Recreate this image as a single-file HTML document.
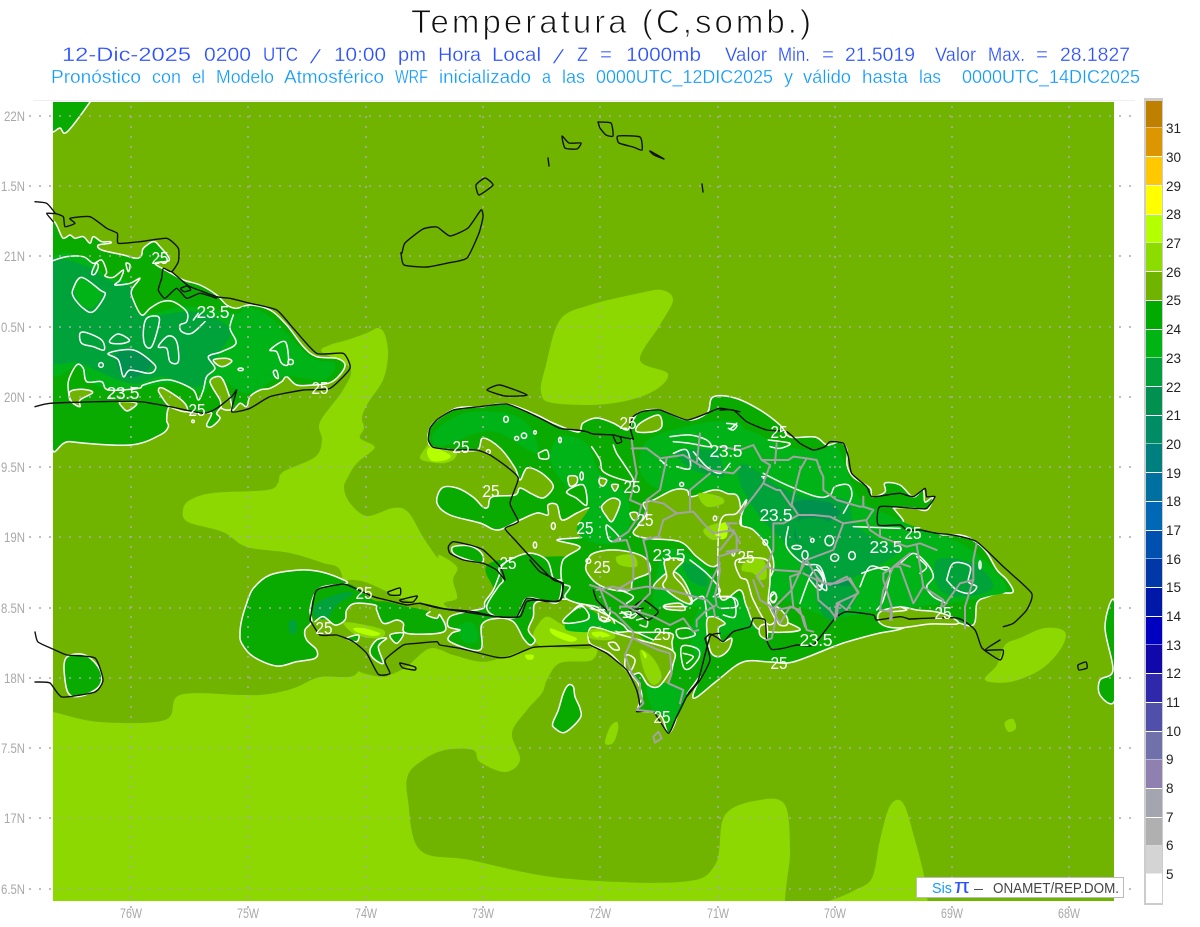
<!DOCTYPE html>
<html lang="es"><head><meta charset="utf-8"><title>Temperatura</title>
<style>
html,body{margin:0;padding:0;background:#fff;width:1200px;height:927px;overflow:hidden}
svg{display:block}
text{font-family:"Liberation Sans",sans-serif}
.t{fill:#111;stroke:#fff;stroke-width:.9;font-size:33px}
.a{fill:#2b50ff;stroke:#fff;stroke-width:.25;font-size:19px}
.b{fill:#119aff;stroke:#fff;stroke-width:.25;font-size:18px}
.l{fill:#a8a8a8;font-size:13.5px}
.c{fill:#222;font-size:13.5px}
.z{fill:#fff;font-size:17.5px;text-anchor:middle}
.w,.k,.g{fill:none;stroke-linejoin:round;stroke-linecap:round;vector-effect:non-scaling-stroke}
.w *,.k *,.g *{vector-effect:non-scaling-stroke}
.w{stroke:#fff;stroke-width:1.5}
.k{stroke:#111;stroke-width:1.4}
.g{stroke:#a3a3a3;stroke-width:2}
.hole{fill:#70b400}
.holew{fill:#70b400;stroke:#fff;stroke-width:1.5;stroke-linejoin:round;vector-effect:non-scaling-stroke}
.d{fill:#09ab00}
.dw{fill:#09ab00;stroke:#fff;stroke-width:1.5;stroke-linejoin:round;vector-effect:non-scaling-stroke}
.m1{fill:#00b316}
.m2{fill:#00a33a}
.m3{fill:#00914f}
.lt{fill:#8cd800}
.lm{fill:#b4ff00}
</style></head><body>
<svg id="s" width="1200" height="927" viewBox="0 0 1200 927" xmlns="http://www.w3.org/2000/svg">
<defs><clipPath id="mp"><rect x="53" y="102" width="1061" height="799"/></clipPath></defs>
<rect width="1200" height="927" fill="#fff"/>
<line x1="33" y1="100.5" x2="1135" y2="100.5" stroke="#eee"/>

<g clip-path="url(#mp)">
<rect x="53" y="102" width="1061" height="799" fill="#70b400"/>
<polygon class="lt" points="30,925 30,720 35,714 45,712 53,712 100,722 165,720 180,695 240,695 260,695 280,692 297,687 320,677 355,675 357,650 345,600 340,570 323,563 290,553 247,547 223,532 188,522 183,510 190,500 213,493 267,490 278,483 283,472 315,457 322,440 320,422 343,390 350,368 322,352 330,345 347,340 367,333 378,328 385,335 388,355 383,380 368,403 362,417 364,428 360,438 373,445 373,450 357,463 348,477 344,488 350,503 367,516 393,508 408,512 423,537 437,557 440,555 457,567 453,580 457,598 447,607 520,640 590,643 592,660 560,663 547,680 542,693 527,710 512,733 520,760 505,772 480,762 473,750 445,750 423,760 408,775 408,800 420,850 470,860 560,878 680,882 715,865 725,815 760,800 785,805 790,850 787,880 785,900 785,915 782,925 500,935 200,935"/>
<polygon class="lt" points="800,925 812,908 840,897 855,890 872,878 880,840 890,806 903,803 915,840 925,880 928,905 930,925 880,935"/>
<polygon class="lt" points="985,680 1010,682 1040,670 1060,650 1065,632 1045,628 1020,638 1005,645 997,665"/>
<polygon class="lt" points="1005,722 1013,719 1016,728 1010,732 1006,729"/>
<polygon class="lt" points="605,743 610,727 617,722 618,730 613,743"/>
<polygon class="lt" points="541,392 546,365 560,320 590,305 640,293 662,290 673,300 660,325 640,360 668,374 650,393 607,404 553,403"/>
<g transform="translate(240,560) scale(.33333)">
<polygon class="hole" points="210,100 345,60 500,120 640,148 770,165 860,125 960,125 1060,255 960,262 880,262 780,295 720,305 640,285 570,265 500,320 450,345 420,350 350,330 340,280 240,240 200,200"/>
<polygon class="lt" points="890,200 920,170 960,190 1000,210 1100,215 1170,240 1150,262 1050,255 960,258 900,258 880,230"/>
<polygon class="lt" points="1195,265 1220,260 1285,310 1280,345 1240,340 1215,300"/>
<polygon class="lt" points="310,190 350,190 430,210 420,235 350,225"/>
<polygon class="lm" points="340,205 375,205 420,220 400,228 355,218"/>
<polygon class="lm" points="930,205 960,215 1010,235 990,245 940,225"/>
<polygon class="lm" points="1060,218 1110,218 1108,230 1062,228"/>
<polygon class="lm" points="856,285 880,285 878,298 862,298"/>
</g>
<polygon class="lt" points="420,458 427,446 432,442 455,450 455,458 445,463 430,462"/>
<polygon class="lm" points="427,452 432,447 450,455 446,460 432,461"/>

<polygon class="dw" points="40,134 53,132 60,128 67,132 90,102 95,92 40,92"/>
<polygon class="dw" points="66,658 85,655 100,670 100,685 85,695 70,695 65,680"/>
<polygon class="dw" points="1114,600 1105,627 1113,670 1100,680 1100,695 1114,702 1120,660"/>
<g transform="translate(30,200) scale(.33333)">
<polygon class="dw" points="60,105 100,115 120,105 135,115 160,110 180,130 190,110 215,125 240,125 240,130 205,135 215,150 280,165 320,175 335,165 340,145 370,125 390,140 418,180 375,190 415,215 460,240 510,255 560,285 590,315 620,325 660,315 720,330 770,375 820,440 860,470 920,475 945,495 925,530 895,550 850,555 800,555 770,530 755,545 720,565 690,570 660,590 650,620 630,610 610,630 600,620 600,590 575,620 560,640 570,655 545,680 530,675 545,640 520,640 470,635 420,620 410,660 415,680 390,705 300,735 120,725 60,705"/>
<polygon class="m1" points="60,190 170,175 230,230 300,250 330,340 470,320 620,340 640,320 720,350 840,470 915,490 880,540 760,530 650,580 560,530 520,580 440,550 320,565 230,565 170,540 140,500 60,510"/>
<polygon class="m2" points="60,200 160,195 235,240 300,260 335,345 500,335 600,390 560,470 510,560 400,530 300,550 150,490 60,470"/>
<polygon class="m3" points="260,462 320,452 365,490 320,530 275,520"/>
<polygon class="m1" points="135,255 155,235 205,270 215,290 185,325 155,315 135,285"/>
</g>
<g transform="translate(240,560) scale(.33333)">
<polygon class="dw" points="0,220 5,250 40,290 110,318 170,305 225,295 230,270 200,240 195,210 215,185 210,150 225,100 250,80 320,70 300,55 240,35 180,30 90,45 40,85 20,130 5,180"/>
<polygon class="d" points="222,185 215,130 240,85 310,72 345,80 400,120 440,125 500,140 530,145 570,155 560,165 590,175 600,165 612,215 500,220 490,190 470,180 430,190 410,150 405,135 345,130 320,150 315,180 285,195 250,170"/>
<polygon class="m2" points="225,170 230,130 300,100 340,100 290,135 262,175"/>
<polygon class="m2" points="145,190 165,180 172,205 155,225"/>
<polygon class="dw" points="390,270 410,240 440,235 415,260 430,310 400,295"/>
<polygon class="dw" points="450,225 490,220 470,250"/>
<polygon class="dw" points="320,235 355,225 350,245"/>
<polygon class="d" points="780,0 760,90 735,125 730,145 680,155 630,170 625,200 660,210 635,220 630,245 720,270 725,195 770,175 820,185 850,235 870,255 885,240 865,210 880,170 885,130 930,120 1000,120 1080,155 1120,180 1130,215 1180,215 1240,240 1300,100 1300,0"/>
<polygon class="m1" points="660,195 700,190 715,240 680,250 660,230"/>
<polygon class="dw" points="970,188 1020,135 1045,175 1000,170"/>
<polygon class="dw" points="985,375 1000,380 1005,410 1020,445 1020,475 975,517 945,505 938,490 955,450 970,400"/>
<g class="w">
<polyline points="780,40 760,90 735,125 730,145 680,155 630,170 625,200 660,210 635,220 630,245 720,270 725,195 770,175 820,185 850,235 870,255 885,240 865,210 880,170 885,130 930,120 1000,120 1080,155 1120,180 1130,215 1180,215 1240,240"/>
<polyline points="225,185 250,170 285,195 315,180 320,150 345,130 405,135 410,150 430,190 470,180 490,190 500,220 612,215 600,165 590,175 560,165 570,155"/>
</g>
</g>
<g transform="translate(420,390) scale(.33333)">
<polygon class="dw" points="240,530 320,490 380,510 400,565 425,575 415,635 380,635 320,625 290,680 230,680 200,650 235,590 250,570"/>
<polygon class="dw" points="100,470 150,468 185,490 185,518 130,505 100,490"/>
</g>
<polygon class="dw" points="633,420 640,412 660,410 687,420 707,413 713,397 735,398 760,410 780,425 790,437 815,437 827,445 840,442 847,450 847,465 853,477 870,488 872,497 885,492 885,483 900,485 913,497 923,490 925,502 933,497 927,510 913,508 895,508 895,510 903,520 905,528 925,535 960,535 977,543 987,553 997,570 1007,580 1013,592 1000,593 987,597 977,603 973,625 950,621 920,623 897,630 880,633 850,641 835,646 793,662 770,662 743,662 718,680 697,697 693,695 700,677 692,687 685,697 680,703 675,723 668,733 662,717 653,712 638,710 642,697 638,683 632,675 640,673 648,685 658,687 668,683 673,663 672,643 670,633 633,632 623,625 610,617 597,607 577,603 565,597 570,587 562,582 563,560 580,547 557,540 583,537 590,530 593,518 590,508 577,513 562,520 557,505 548,505 548,515 537,513 520,520 498,530 480,523 450,515 437,503 442,488 457,488 473,497 483,507 488,507 492,497 515,495 520,488 532,494 543,498 552,490 552,483 540,472 527,468 520,480 515,468 500,448 483,438 477,450 453,450 433,447 428,440 430,428 437,420 457,408 480,407 507,404 537,415 553,423 578,432 583,423 597,418 613,423 627,430"/>

<g transform="translate(420,390) scale(.33333)">
<polygon class="m1" points="40,130 130,70 260,70 330,110 350,190 240,130 170,130 60,170"/>
<polygon class="m1" points="420,140 500,160 540,250 620,310 620,440 530,460 470,420 510,340 440,290 390,210"/>
<polygon class="m1" points="700,140 960,100 960,290 820,300 720,300 660,240"/>
<polygon class="m2" points="780,180 960,190 960,260 850,250 790,220"/>
<polygon class="m1" points="730,490 800,490 880,560 870,640 760,650 700,640"/>
<polygon class="m2" points="790,520 850,540 860,590 810,570"/>
<polygon class="m1" points="480,650 560,690 600,720 440,720"/>
</g>
<g transform="translate(720,390) scale(.33333)">
<polygon class="m1" points="0,130 80,120 200,170 300,180 350,170 400,290 440,340 560,400 740,470 860,590 800,620 680,640 500,660 340,680 220,640 150,600 130,500 40,420 20,300"/>
<polygon class="m2" points="70,220 180,290 260,320 380,330 400,395 470,450 540,480 450,540 380,570 300,600 240,520 205,470 120,380 60,280"/>
<polygon class="m3" points="225,335 320,335 360,370 320,400 260,470 222,440 235,380"/>
<polygon class="m2" points="230,400 300,385 340,420 320,490 250,490"/>
<polygon class="m3" points="310,580 380,570 390,610 340,630"/>
<polygon class="m2" points="650,510 760,520 820,590 740,620 660,600"/>
</g>
<g transform="translate(590,560) scale(.33333)">
<polygon class="m1" points="170,380 240,370 290,400 255,480 225,470 190,450"/>
<polygon class="m1" points="370,90 480,130 510,200 430,215 360,250 320,290 300,220 330,140"/>
<polygon class="m2" points="690,90 780,80 790,130 730,180 690,150"/>
</g>

<polygon class="holew" points="880,612 900,607 917,610 937,612 953,618 957,624 930,624 897,628 880,623"/>
<g transform="translate(30,200) scale(.33333)">
<polygon class="holew" points="120,575 160,568 188,578 150,600 150,620 125,605"/>
<polygon class="holew" points="270,605 320,610 295,632 280,625"/>
<polygon class="holew" points="385,570 400,565 460,605 470,635 420,620 395,590"/>
<polygon class="holew" points="550,480 590,475 605,485 575,500"/>
<polygon class="holew" points="540,545 570,530 590,565 605,625 575,625 570,600"/>
</g>
<g transform="translate(420,390) scale(.33333)">
<polygon class="holew" points="660,100 715,75 725,110 700,125 650,125"/>
<polygon class="holew" points="545,350 575,325 600,335 590,370 575,395 560,380"/>
<polygon class="holew" points="630,370 650,368 655,385 640,390"/>
<polygon class="holew" points="445,260 470,260 470,280 450,288"/>
<polygon class="holew" points="540,265 560,270 550,288 538,280"/>
<polygon class="holew" points="575,285 595,285 585,303"/>
<polygon class="holew" points="670,340 700,330 760,300 800,300 815,320 880,300 920,310 960,340 960,560 930,500 880,530 830,500 780,455 680,445 640,430 660,400 680,370"/>
<polygon class="holew" points="500,520 520,490 590,480 670,500 690,545 640,570 630,600 580,600 530,580 500,545"/>
<polygon class="holew" points="750,545 790,570 815,640 740,600 700,590"/>
<polygon class="lt" points="590,500 640,495 650,530 600,525"/>
<polygon class="lt" points="835,310 900,320 910,340 860,350"/>
<polygon class="lt" points="850,420 900,400 930,430 880,450"/>
<polygon class="lm" points="885,428 912,425 905,442 890,440"/>
<polygon class="dw" points="430,690 480,650 505,670 500,690 445,700"/>
<polygon class="dw" points="440,305 490,285 500,345 470,325"/>
</g>
<g transform="translate(720,390) scale(.33333)">
<polygon class="holew" points="0,400 50,370 80,330 60,400 100,420 150,480 160,540 130,600 150,640 170,680 240,720 120,720 80,650 60,600 0,620"/>
<polygon class="lt" points="70,510 140,505 150,560 110,570 75,550"/>
<polygon class="lm" points="80,520 125,515 120,545 90,545"/>
<polygon class="lm" points="0,405 22,400 20,440 0,445"/>
</g>
<g transform="translate(590,560) scale(.33333)">
<polygon class="holew" points="0,205 30,205 60,215 130,235 245,270 250,310 230,350 205,380 175,375 150,340 120,340 60,280 0,250"/>
<polygon class="lt" points="150,270 190,295 215,350 190,375 165,340"/>
<polygon class="lm" points="155,270 170,285 165,295"/>
<polygon class="lt" points="0,210 35,208 75,225 60,240 0,235"/>
<polygon class="lm" points="5,218 35,215 60,228 20,232"/>
<polygon class="holew" points="225,135 270,130 285,150 250,150 225,145"/>
<polygon class="holew" points="350,185 370,170 405,190 385,205 395,245 425,235 415,270 385,290 360,270"/>
<polygon class="holew" points="440,0 530,0 540,60 535,130 555,180 530,190 490,120 480,90 470,60 450,50"/>
<polygon class="lt" points="455,30 470,0 520,0 530,50 510,60 490,40"/>
<polygon class="holew" points="558,140 590,170 590,195 565,190"/>
<polygon class="holew" points="510,200 530,195 530,235 510,225"/>
<polygon class="holew" points="225,0 280,0 250,40 280,80 305,130 270,120 220,80 230,50"/>
<polygon class="holew" points="30,170 60,180 40,185"/>
</g>

<g class="w" transform="translate(30,200) scale(.33333)">
<polyline points="60,185 110,170 160,170 190,190 215,180 230,215 225,228 250,232 280,210 270,240 255,255 300,250 330,235 305,270 310,300 335,345 360,325 395,305 430,305 470,335 470,365 450,375 455,395 485,400 525,365"/>
<polyline points="610,345 600,385 618,430 575,455 535,470 555,505 530,530 520,570 505,600 490,570 440,545 400,540 340,555 325,565 235,570 215,545 170,545 160,505 140,495 115,545 119,600"/>
<polygon points="130,265 155,232 210,270 225,285 190,335 160,325 130,290"/>
<polygon points="150,400 170,398 215,420 222,450 190,440 155,430"/>
<polygon points="240,420 265,402 298,420 280,430 245,430"/>
<polygon points="235,460 310,450 370,490 375,510 355,520 300,510 280,530 265,480"/>
<polygon points="340,395 350,355 385,350 385,380 365,440 345,435"/>
<polygon points="385,440 415,408 440,425 445,485 420,485 410,445"/>
<polygon points="720,450 765,425 775,490 755,490 740,455"/>
<polygon points="185,220 198,190 205,200 195,222"/>
<polygon points="288,190 300,195 295,215"/>
<polygon points="730,515 740,512 745,535 735,530"/>
<circle cx="782" cy="486" r="8"/><ellipse cx="632" cy="508" rx="8" ry="4"/><circle cx="213" cy="495" r="7"/>
<circle cx="489" cy="664" r="4"/><polyline points="490,360 505,340"/>
</g>
<g class="w" transform="translate(420,390) scale(.33333)">
<polyline points="515,170 540,210 550,245 610,270 640,270 610,220 590,190 580,165"/>
<polygon points="560,405 600,445 580,455 565,445"/>
<polyline points="355,190 380,180 385,205 360,205 355,190"/>
<ellipse cx="258" cy="88" rx="7" ry="9"/><ellipse cx="312" cy="137" rx="8" ry="8"/><ellipse cx="345" cy="127" rx="4" ry="5"/><ellipse cx="290" cy="145" rx="6" ry="6"/>
<ellipse cx="420" cy="150" rx="4" ry="8"/><ellipse cx="205" cy="185" rx="6" ry="6"/><ellipse cx="345" cy="465" rx="5" ry="9"/><ellipse cx="400" cy="408" rx="6" ry="10"/>
<ellipse cx="505" cy="513" rx="7" ry="7"/><ellipse cx="485" cy="258" rx="5" ry="12"/><ellipse cx="785" cy="283" rx="6" ry="6"/><ellipse cx="885" cy="385" rx="5" ry="7"/><ellipse cx="940" cy="490" rx="4" ry="8"/>
<polyline points="750,140 810,135 860,150 870,170 810,160 760,155"/>
<polyline points="760,190 800,180 810,235 770,230"/>
<polyline points="920,100 950,105 940,120 925,115"/>
<polyline points="720,210 740,225 730,220"/>
<polyline points="820,185 860,230 900,250 930,220"/>
<polyline points="810,510 860,550 900,600 880,620"/>
<polyline points="600,600 640,620 620,640"/>
<polyline points="600,670 630,665 630,680 610,682"/>
<polyline points="900,620 945,625 950,650 905,655"/>
</g>
<g class="w" transform="translate(720,390) scale(.33333)">
<polyline points="130,250 200,285 290,320 330,315 345,290 385,285 395,320 370,370"/>
<polyline points="145,150 210,160 180,175 150,170"/>
<polyline points="205,410 200,470 250,520 300,530 320,600 290,580"/>
<ellipse cx="328" cy="452" rx="13" ry="15"/><ellipse cx="344" cy="503" rx="12" ry="11"/><ellipse cx="396" cy="497" rx="10" ry="12"/><ellipse cx="277" cy="451" rx="5" ry="6"/><ellipse cx="136" cy="457" rx="7" ry="8"/>
<ellipse cx="230" cy="472" rx="14" ry="6"/><ellipse cx="255" cy="495" rx="9" ry="13"/><ellipse cx="780" cy="525" rx="3" ry="12"/><ellipse cx="160" cy="622" rx="9" ry="16"/>
<polyline points="420,590 450,530 500,540 540,520 580,490 620,520 640,560 620,590 640,620 680,640"/>
<polyline points="680,570 700,520 750,530 745,575 770,590 750,610 710,600 680,570"/>
<polyline points="590,500 620,530 600,550"/>
<polyline points="400,410 540,415"/>
<polyline points="125,260 135,260 130,265"/>
<polyline points="40,110 50,100 30,118"/>
<polyline points="240,640 270,560 290,540 310,570 300,590"/>
</g>
<g class="w" transform="translate(590,560) scale(.33333)">
<polygon points="110,285 135,300 120,335 105,320"/>
<polygon points="275,260 320,265 328,290 300,325 280,320"/>
<polygon points="55,250 75,248 88,268 70,268"/>
<polyline points="0,145 25,150 60,150 50,180 30,180 25,160"/>
<polyline points="95,155 125,165 150,150 125,175 95,155"/>
<polyline points="140,180 170,175 170,200 150,195"/>
<polygon points="260,210 295,205 315,225 270,235"/>
<polyline points="385,110 430,115 435,170 400,165"/>
<polyline points="220,140 290,140"/>
<polyline points="300,130 340,110 350,170"/>
<polygon points="540,115 555,100 560,115 550,125"/>
<polyline points="680,20 700,50 690,90 660,60"/>
<polyline points="815,40 860,25 900,30 880,120 860,150"/>
<polyline points="930,140 950,150 910,155"/>
<polyline points="280,280 310,290 290,310"/>
</g>
</g>

<g stroke="#aaa" stroke-width="1.6" stroke-dasharray="2 8" fill="none">
<path d="M29 116H1135M29 186H1135M29 256H1135M29 327H1135M29 397H1135M29 467H1135M29 537H1135M29 608H1135M29 678H1135M29 748H1135M29 818H1135M29 889H1135"/>
<path d="M131 106V908M248 106V908M366 106V908M483 106V908M600 106V908M718 106V908M835 106V908M952 106V908M1069 106V908"/>
</g>

<g class="k" transform="translate(30,200) scale(.33333)">
<polyline points="15,5 50,10 75,40 50,40 70,65"/>
<polyline points="75,40 100,50 105,80 135,70 120,55 180,50 230,85 262,100 265,130 330,125 410,115 445,145 445,185 425,215 400,205 395,235 385,270 405,295 440,265 470,295 510,280 560,295"/>
<polyline points="425,215 460,245 480,260 560,290 600,295 660,310 740,330 790,385 860,460 940,460 960,505 900,565 820,570 720,590 660,625 605,635 620,570 605,590 560,625 520,640 420,620 330,605 200,605 60,610 15,620"/>
<polygon points="452,265 472,258 482,270 462,275"/>
</g>
<g class="k">
<polyline points="35,632 38,642 55,650 67,655 95,658 103,680 95,692 62,697 50,683 35,682"/>
<polygon points="402,253 405,243 423,229 437,227 450,236 468,228 481,210 483,217 479,233 467,258 448,263 427,267 404,265 401,253"/>
<polygon points="485,178 493,185 479,195 476,185"/>
<polygon points="562,136 569,143 581,143 577,149 565,148"/>
<polyline points="548,158 549,166"/>
<polyline points="598,122 611,123 613,136 606,135 600,128 598,122"/>
<polygon points="618,136 640,137 642,150 633,147 619,143"/>
<polygon points="650,151 664,159 654,155"/>
<polyline points="702,184 703,192"/>
<polygon points="487,390 500,385 527,395 505,396"/>
<polygon points="388,592 400,588 400,595 390,595"/>
<polygon points="400,600 417,596 413,602 403,602"/>
<polygon points="400,663 415,667 415,670 403,668"/>
<polygon points="1078,665 1086,662 1087,668 1079,670"/>
</g>
<g class="k" transform="translate(420,390) scale(.33333)">
<polyline points="640,148 600,140 580,135 520,132 500,125 470,120 420,115 380,95 330,70 260,42 180,50 100,60 50,90 30,115 25,150 40,172 100,180 170,180 210,195 260,230 295,265 270,340 295,395 255,415 285,450 340,510 400,570 430,580 420,630 380,635 320,625 290,680 230,680 160,665 60,655 0,640"/>
<polyline points="640,148 630,110 640,80 665,65 720,60 800,90 860,70 900,55 960,65"/>
<polygon points="85,470 100,455 150,465 190,480 240,530 255,570 230,540 190,520 130,510 90,490"/>
<polyline points="580,140 590,160 605,155 600,140"/>
</g>
<g class="k" transform="translate(720,390) scale(.33333)">
<polyline points="0,60 40,60 80,95 140,120 200,125 240,160 280,180 315,170 330,155 370,160 385,200 395,250 440,290 455,320 500,315 540,310 580,320 615,295 620,320 645,320 620,355 580,355 480,350 475,405 540,405 560,420 600,420 650,430 700,435 770,455 850,530 935,610 920,660 880,700 850,710"/>
</g>
<g class="k" transform="translate(240,560) scale(.33333)">
<polyline points="1050,255 1100,280 1160,330 1190,390 1200,440 1190,455 1240,455 1285,520 1310,470 1345,400 1375,360 1410,230 1440,220"/>
<polyline points="210,180 225,100 240,85 310,72 345,85 400,110 440,120 500,135 540,130 620,148 690,158 770,170 840,170 860,125 900,120 950,125 965,115 965,70 900,35 870,0"/>
<polyline points="210,180 240,225 290,225 340,245 380,280 415,343 450,340 435,300 490,255 530,250 590,245 600,255 660,265 770,292 810,290 880,262 960,258 1050,255"/>
</g>
<g class="k" transform="translate(590,560) scale(.33333)">
<polyline points="345,235 360,222 385,235 400,245 430,215 480,200 490,175 525,180 530,240 545,268 580,265 620,255 670,255 735,175 770,155 850,165 860,180 930,170 960,178"/>
<polyline points="345,235 360,300 330,360 290,410"/>
<polyline points="10,90 20,120 50,150"/>
<polyline points="125,145 160,120 205,155 175,180 150,165 125,145"/>
<polyline points="120,150 160,145"/>
</g>
<polyline class="k" points="910,619 957,618 975,630 982,648 1000,660 1003,650 985,650 1000,640"/>

<g class="g" transform="translate(420,390) scale(.33333)">
<polyline points="635,150 640,190 650,250 630,330 665,345 655,380 625,425 580,455 620,450 640,510 640,570 590,600"/>
<polyline points="635,175 680,175 720,205 790,195 830,220 865,240 940,250 960,230"/>
<polyline points="740,205 720,300 680,330 730,340 770,370 820,365 850,400 880,430 940,420 960,460"/>
<polyline points="870,250 810,300 810,360"/>
<polyline points="840,130 830,220"/>
<polyline points="680,330 680,360 660,400"/>
<polyline points="770,370 730,390 715,440 670,450 680,490 690,560 690,610 650,650 600,650"/>
<polyline points="530,600 580,590 620,600 680,590 750,600 860,630 880,650 885,680"/>
<polyline points="900,520 880,560 860,620"/>
<polyline points="960,480 895,500 895,520"/>
</g>
<g class="g" transform="translate(720,390) scale(.33333)">
<polyline points="0,170 60,180 100,165 125,210 205,210 220,200 260,205 290,210 300,240 310,260 310,300 350,330 420,350 430,350 460,360 440,390 370,400 330,380 280,375 235,375 215,345 220,320 240,240 260,205"/>
<polyline points="125,210 150,225 130,280 100,320 60,370"/>
<polyline points="130,280 170,300 180,300 215,350"/>
<polyline points="170,160 165,220"/>
<polyline points="430,320 430,350"/>
<polyline points="235,375 190,400 160,400 160,480 140,530 165,540 240,545 215,600 155,660 180,700 210,650 240,660 255,710"/>
<polyline points="240,545 260,510 340,480 370,400"/>
<polyline points="260,510 290,560 310,580 350,580 390,565 415,610 350,640 345,690"/>
<polyline points="290,560 295,630 330,660 345,680"/>
<polyline points="440,395 450,420 480,440 560,470 600,460 650,480"/>
<polyline points="480,415 480,440"/>
<polyline points="570,490 520,530 490,600 480,660 515,665 515,690"/>
<polyline points="520,530 540,530 580,640 610,590 670,630 660,660"/>
<polyline points="610,590 590,465"/>
<polyline points="770,460 760,510 760,570 720,580 670,650"/>
<polyline points="760,570 735,650 735,715"/>
<polyline points="0,480 40,430 20,400 50,400"/>
<polyline points="50,440 50,480 20,485"/>
<polyline points="140,530 110,560 130,590"/>
</g>
<g class="g" transform="translate(590,560) scale(.33333)">
<polyline points="55,150 75,160 130,215 125,240 105,285 125,340"/>
<polyline points="130,235 160,250 205,270 240,280 245,340 235,370 280,390 270,430"/>
<polyline points="100,130 130,150 190,170 240,195 280,175 310,215 325,210"/>
<polyline points="320,200 320,180 345,155 380,135 375,105 385,60 390,30 385,0"/>
<polyline points="490,60 510,120 535,135 560,150 555,190 545,235 530,240"/>
<polyline points="560,150 610,140 640,170 650,210 670,215"/>
<polyline points="610,140 600,50 630,40 640,0"/>
<polyline points="640,40 680,60 720,75 770,50 805,95 770,150 745,130 740,170"/>
<polyline points="900,180 905,140 880,60 880,40 930,10 960,20"/>
<polyline points="0,75 30,85 55,150"/>
<polyline points="100,130 30,85"/>
<polyline points="125,340 150,370 150,400 160,430 140,450 190,455"/>
<polygon points="190,530 205,515 215,535 195,548"/>
</g>

<g class="z">
<text x="160" y="264" textLength="17" lengthAdjust="spacingAndGlyphs">25</text><text x="320" y="394" textLength="17" lengthAdjust="spacingAndGlyphs">25</text><text x="197" y="416" textLength="17" lengthAdjust="spacingAndGlyphs">25</text><text x="461" y="453" textLength="17" lengthAdjust="spacingAndGlyphs">25</text><text x="491" y="497" textLength="17" lengthAdjust="spacingAndGlyphs">25</text><text x="628" y="429" textLength="17" lengthAdjust="spacingAndGlyphs">25</text><text x="632" y="493" textLength="17" lengthAdjust="spacingAndGlyphs">25</text><text x="645" y="526" textLength="17" lengthAdjust="spacingAndGlyphs">25</text><text x="585" y="534" textLength="17" lengthAdjust="spacingAndGlyphs">25</text><text x="602" y="573" textLength="17" lengthAdjust="spacingAndGlyphs">25</text><text x="508" y="569" textLength="17" lengthAdjust="spacingAndGlyphs">25</text><text x="746" y="563" textLength="17" lengthAdjust="spacingAndGlyphs">25</text><text x="779" y="438" textLength="17" lengthAdjust="spacingAndGlyphs">25</text><text x="913" y="539" textLength="17" lengthAdjust="spacingAndGlyphs">25</text><text x="364" y="599" textLength="17" lengthAdjust="spacingAndGlyphs">25</text><text x="324" y="634" textLength="17" lengthAdjust="spacingAndGlyphs">25</text><text x="662" y="640" textLength="17" lengthAdjust="spacingAndGlyphs">25</text><text x="779" y="669" textLength="17" lengthAdjust="spacingAndGlyphs">25</text><text x="943" y="619" textLength="17" lengthAdjust="spacingAndGlyphs">25</text><text x="662" y="723" textLength="17" lengthAdjust="spacingAndGlyphs">25</text>
<text x="213" y="318" textLength="33">23.5</text><text x="123" y="399" textLength="33">23.5</text><text x="726" y="457" textLength="33">23.5</text><text x="776" y="521" textLength="33">23.5</text><text x="669" y="561" textLength="33">23.5</text><text x="886" y="553" textLength="33">23.5</text><text x="816" y="646" textLength="33">23.5</text>
</g>

<text class="t" x="411" y="33" textLength="400" lengthAdjust="spacing">Temperatura (C,somb.)</text>
<g class="a">
<text x="62" y="61" textLength="129" lengthAdjust="spacingAndGlyphs">12-Dic-2025</text>
<text x="204" y="61" textLength="47" lengthAdjust="spacingAndGlyphs">0200</text>
<text x="263" y="61" textLength="35" lengthAdjust="spacingAndGlyphs">UTC</text>
<text transform="translate(310,63) skewX(-22)" stroke-width="0">/</text>
<text x="334" y="61" textLength="52" lengthAdjust="spacingAndGlyphs">10:00</text>
<text x="398" y="61" textLength="28" lengthAdjust="spacingAndGlyphs">pm</text>
<text x="438" y="61" textLength="43" lengthAdjust="spacingAndGlyphs">Hora</text>
<text x="492" y="61" textLength="49" lengthAdjust="spacingAndGlyphs">Local</text>
<text transform="translate(553,63) skewX(-22)" stroke-width="0">/</text>
<text x="577" y="61" textLength="11" lengthAdjust="spacingAndGlyphs">Z</text>
<text x="600" y="61" textLength="12" lengthAdjust="spacingAndGlyphs">=</text>
<text x="626" y="61" textLength="75" lengthAdjust="spacingAndGlyphs">1000mb</text>
<text x="725" y="61" textLength="42" lengthAdjust="spacingAndGlyphs">Valor</text>
<text x="778" y="61" textLength="32" lengthAdjust="spacingAndGlyphs">Min.</text>
<text x="822" y="61" textLength="12" lengthAdjust="spacingAndGlyphs">=</text>
<text x="845" y="61" textLength="70" lengthAdjust="spacingAndGlyphs">21.5019</text>
<text x="935" y="61" textLength="41" lengthAdjust="spacingAndGlyphs">Valor</text>
<text x="988" y="61" textLength="37" lengthAdjust="spacingAndGlyphs">Max.</text>
<text x="1036" y="61" textLength="12" lengthAdjust="spacingAndGlyphs">=</text>
<text x="1060" y="61" textLength="70" lengthAdjust="spacingAndGlyphs">28.1827</text>
</g>
<g class="b">
<text x="51" y="83" textLength="90" lengthAdjust="spacingAndGlyphs">Pronóstico</text>
<text x="152" y="83" textLength="29" lengthAdjust="spacingAndGlyphs">con</text>
<text x="192" y="83" textLength="13" lengthAdjust="spacingAndGlyphs">el</text>
<text x="216" y="83" textLength="58" lengthAdjust="spacingAndGlyphs">Modelo</text>
<text x="284" y="83" textLength="100" lengthAdjust="spacingAndGlyphs">Atmosférico</text>
<text x="395" y="83" textLength="33" lengthAdjust="spacingAndGlyphs">WRF</text>
<text x="439" y="83" textLength="92" lengthAdjust="spacingAndGlyphs">inicializado</text>
<text x="542" y="83" textLength="9" lengthAdjust="spacingAndGlyphs">a</text>
<text x="562" y="83" textLength="23" lengthAdjust="spacingAndGlyphs">las</text>
<text x="596" y="83" textLength="177" lengthAdjust="spacingAndGlyphs">0000UTC_12DIC2025</text>
<text x="784" y="83" textLength="9" lengthAdjust="spacingAndGlyphs">y</text>
<text x="803" y="83" textLength="48" lengthAdjust="spacingAndGlyphs">válido</text>
<text x="862" y="83" textLength="46" lengthAdjust="spacingAndGlyphs">hasta</text>
<text x="919" y="83" textLength="22" lengthAdjust="spacingAndGlyphs">las</text>
<text x="962" y="83" textLength="178" lengthAdjust="spacingAndGlyphs">0000UTC_14DIC2025</text>
</g>

<g class="l">
<text x="4" y="121" textLength="21" lengthAdjust="spacingAndGlyphs">22N</text><text x="1" y="191" textLength="24" lengthAdjust="spacingAndGlyphs">1.5N</text><text x="4" y="261" textLength="21" lengthAdjust="spacingAndGlyphs">21N</text><text x="1" y="332" textLength="24" lengthAdjust="spacingAndGlyphs">0.5N</text><text x="4" y="402" textLength="21" lengthAdjust="spacingAndGlyphs">20N</text><text x="1" y="472" textLength="24" lengthAdjust="spacingAndGlyphs">9.5N</text><text x="4" y="542" textLength="21" lengthAdjust="spacingAndGlyphs">19N</text><text x="1" y="613" textLength="24" lengthAdjust="spacingAndGlyphs">8.5N</text><text x="4" y="683" textLength="21" lengthAdjust="spacingAndGlyphs">18N</text><text x="1" y="753" textLength="24" lengthAdjust="spacingAndGlyphs">7.5N</text><text x="4" y="823" textLength="21" lengthAdjust="spacingAndGlyphs">17N</text><text x="1" y="894" textLength="24" lengthAdjust="spacingAndGlyphs">6.5N</text>
</g>
<g class="l">
<text x="120" y="918" textLength="22" lengthAdjust="spacingAndGlyphs">76W</text><text x="237" y="918" textLength="22" lengthAdjust="spacingAndGlyphs">75W</text><text x="355" y="918" textLength="22" lengthAdjust="spacingAndGlyphs">74W</text><text x="472" y="918" textLength="22" lengthAdjust="spacingAndGlyphs">73W</text><text x="589" y="918" textLength="22" lengthAdjust="spacingAndGlyphs">72W</text><text x="707" y="918" textLength="22" lengthAdjust="spacingAndGlyphs">71W</text><text x="824" y="918" textLength="22" lengthAdjust="spacingAndGlyphs">70W</text><text x="941" y="918" textLength="22" lengthAdjust="spacingAndGlyphs">69W</text><text x="1058" y="918" textLength="22" lengthAdjust="spacingAndGlyphs">68W</text>
</g>

<rect x="916.5" y="877.5" width="207" height="20" fill="#fff" stroke="#bbb"/>
<text x="932" y="893" font-size="15" fill="#119aff" textLength="20" lengthAdjust="spacingAndGlyphs">Sis</text>
<text x="954" y="893" font-size="20" fill="#2b50ff" textLength="16" lengthAdjust="spacingAndGlyphs">π</text>
<text x="974" y="893" font-size="14" fill="#444" textLength="9" lengthAdjust="spacingAndGlyphs">–</text>
<text x="993" y="893" font-size="14.5" fill="#444" textLength="126" lengthAdjust="spacingAndGlyphs">ONAMET/REP.DOM.</text>

<rect x="1144" y="98" width="19" height="807" fill="#ccc"/>
<rect x="1146" y="101" width="16" height="802" fill="#fff"/>
<g>
<rect x="1146" y="101" width="16" height="26.5" fill="#bf8000"/>
<rect x="1146" y="128" width="16" height="28" fill="#dc9600"/>
<rect x="1146" y="157" width="16" height="28" fill="#ffc800"/>
<rect x="1146" y="186" width="16" height="28" fill="#ffff00"/>
<rect x="1146" y="215" width="16" height="27.5" fill="#b4ff00"/>
<rect x="1146" y="243" width="16" height="28" fill="#8cdc00"/>
<rect x="1146" y="272" width="16" height="28" fill="#70b400"/>
<rect x="1146" y="301" width="16" height="28" fill="#00aa00"/>
<rect x="1146" y="330" width="16" height="27.5" fill="#00b414"/>
<rect x="1146" y="358" width="16" height="28" fill="#00a03c"/>
<rect x="1146" y="387" width="16" height="28" fill="#009050"/>
<rect x="1146" y="416" width="16" height="27.5" fill="#008c64"/>
<rect x="1146" y="444" width="16" height="28" fill="#007f7f"/>
<rect x="1146" y="473" width="16" height="28" fill="#0070a0"/>
<rect x="1146" y="502" width="16" height="28" fill="#0068b4"/>
<rect x="1146" y="531" width="16" height="27.5" fill="#0050b0"/>
<rect x="1146" y="559" width="16" height="28" fill="#0038a8"/>
<rect x="1146" y="588" width="16" height="28" fill="#0018a8"/>
<rect x="1146" y="617" width="16" height="27.5" fill="#0000c0"/>
<rect x="1146" y="645" width="16" height="28" fill="#1008aa"/>
<rect x="1146" y="674" width="16" height="28" fill="#3028aa"/>
<rect x="1146" y="703" width="16" height="28" fill="#5050aa"/>
<rect x="1146" y="732" width="16" height="27.5" fill="#7070aa"/>
<rect x="1146" y="760" width="16" height="28" fill="#9080b0"/>
<rect x="1146" y="789" width="16" height="28" fill="#a5a5b0"/>
<rect x="1146" y="818" width="16" height="27.5" fill="#b0b0b0"/>
<rect x="1146" y="846" width="16" height="27.5" fill="#d4d4d4"/>
</g>
<g class="c">
<text x="1166" y="133">31</text><text x="1166" y="162">30</text><text x="1166" y="191">29</text><text x="1166" y="219">28</text><text x="1166" y="248">27</text><text x="1166" y="277">26</text><text x="1166" y="305">25</text><text x="1166" y="334">24</text><text x="1166" y="363">23</text><text x="1166" y="392">22</text><text x="1166" y="420">21</text><text x="1166" y="449">20</text><text x="1166" y="478">19</text><text x="1166" y="506">18</text><text x="1166" y="535">17</text><text x="1166" y="564">16</text><text x="1166" y="592">15</text><text x="1166" y="621">14</text><text x="1166" y="650">13</text><text x="1166" y="678">12</text><text x="1166" y="707">11</text><text x="1166" y="736">10</text><text x="1166" y="764">9</text><text x="1166" y="793">8</text><text x="1166" y="822">7</text><text x="1166" y="850">6</text><text x="1166" y="879">5</text>
</g>
</svg>
<script>
/* round the traced contours into smooth curves */
(function(){
var ns="http://www.w3.org/2000/svg";
document.querySelectorAll("#s polygon,#s polyline").forEach(function(e){
  if(e.closest(".g"))return;
  var t=e.closest(".k")?0.09:(1/6);
  var n=e.points.numberOfItems,P=[],i;
  for(i=0;i<n;i++){var q=e.points.getItem(i);P.push([q.x,q.y]);}
  if(n<3)return;
  var cl=e.tagName.toLowerCase()=="polygon";
  var g=function(i){return cl?P[(i+n)%n]:P[Math.max(0,Math.min(n-1,i))];};
  var d="M"+P[0][0]+" "+P[0][1],m=cl?n:n-1;
  for(i=0;i<m;i++){
    var a=g(i-1),b=g(i),c=g(i+1),f=g(i+2);
    d+="C"+(b[0]+(c[0]-a[0])*t).toFixed(1)+" "+(b[1]+(c[1]-a[1])*t).toFixed(1)+" "+(c[0]-(f[0]-b[0])*t).toFixed(1)+" "+(c[1]-(f[1]-b[1])*t).toFixed(1)+" "+c[0]+" "+c[1];
  }
  if(cl)d+="Z";
  var p=document.createElementNS(ns,"path");
  p.setAttribute("d",d);
  if(e.getAttribute("class"))p.setAttribute("class",e.getAttribute("class"));
  e.parentNode.replaceChild(p,e);
});
})();
</script>
</body></html>
